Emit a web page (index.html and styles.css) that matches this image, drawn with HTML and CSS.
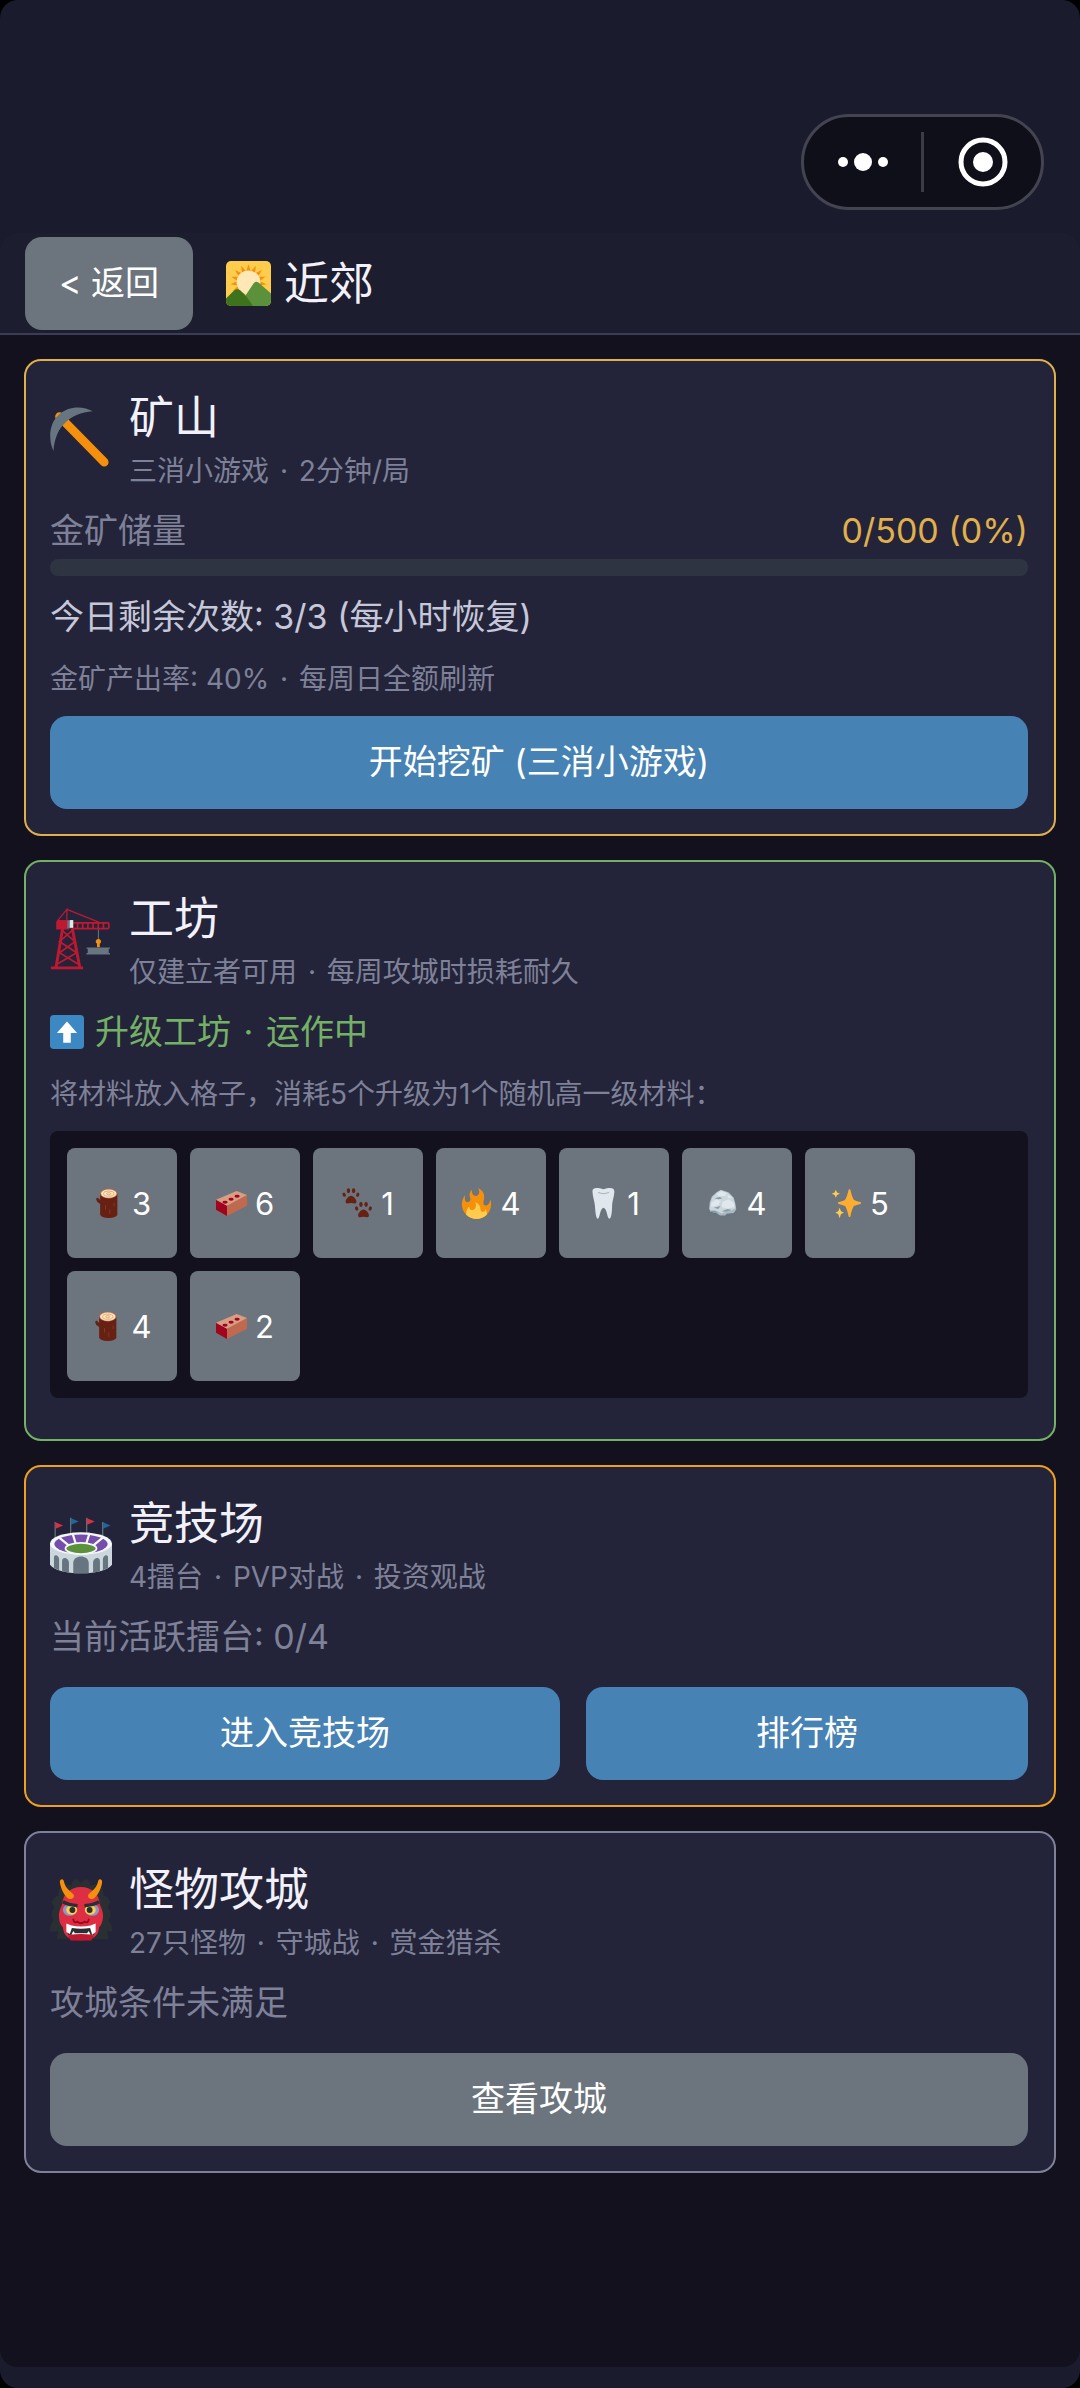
FILE: index.html
```html
<!DOCTYPE html>
<html lang="zh-CN">
<head>
    <meta charset="UTF-8">
    <meta name="viewport" content="width=device-width, initial-scale=1.0">
    <title>近郊</title>
    <link rel="stylesheet" href="styles.css">
</head>
<body>

    <!-- Shared icons -->
    <svg class="sprite" aria-hidden="true">
        <symbol id="i-sunrise" viewBox="0 0 36 36">
            <rect width="36" height="36" rx="4" fill="#ffcc4d"/>
            <g fill="#f4900c">
                <path id="ray" d="M16 9 18 2.500l2 6.500z"/>
                <use href="#ray" transform="rotate(24 18 17)"/>
                <use href="#ray" transform="rotate(48 18 17)"/>
                <use href="#ray" transform="rotate(72 18 17)"/>
                <use href="#ray" transform="rotate(96 18 17)"/>
                <use href="#ray" transform="rotate(-24 18 17)"/>
                <use href="#ray" transform="rotate(-48 18 17)"/>
                <use href="#ray" transform="rotate(-72 18 17)"/>
                <use href="#ray" transform="rotate(-96 18 17)"/>
                <use href="#ray" transform="rotate(-120 18 17)"/>
            </g>
            <circle cx="18" cy="17" r="9.500" fill="#ffe8b6"/>
            <path fill="#5c913b" d="M10 36 22 18q2.500-3 5 0l9 8v6a4 4 0 0 1-4 4z"/>
            <path fill="#3e721d" d="M0 30l6.500-6.500q2.500-2 5 0Q17 28 21.500 36H4a4 4 0 0 1-4-4z"/>
        </symbol>
        <symbol id="i-pickaxe" viewBox="0 0 36 36">
            <path d="M5.500 5.500 31.500 32" stroke="#f4900c" stroke-width="5" stroke-linecap="round"/>
            <path fill="#66757f" d="M24.800 2.500C19-.8 10.500-.6 4.800 4.800-.8 10-.9 19.500 2 25.500 2.600 18 5 12.600 9 9c4-3.900 9-6 15.800-6.500z"/>
        </symbol>
        <symbol id="i-crane" viewBox="0 0 36 36">
            <g fill="none" stroke="#be1931">
                <path stroke-width=".7" d="M4.300 7.500 9.800.8v7M9.800.8 28.300 8.200"/>
                <path stroke-width="1.700" d="M7.300 12 3.500 34.500M13 12l4.300 22.500"/>
                <path stroke-width="1" d="M7 13l7.500 6.500-9 6.500 11.500 7M13 13l-7.500 6.500 10 6.500-12 7"/>
                <path stroke-width="1" d="M13 8.600h20.500q.7 0 .7.700v2q0 .7-.7.700H13zM16 8.600V12M19 8.600V12M22 8.600V12M25 8.600V12M28 8.600V12M31 8.600V12"/>
            </g>
            <path fill="#be1931" d="M.5 33.900h18.700v1.700H.5zM4.500 7H11v5.500H3.600V8z"/>
            <path fill="#66757f" d="M10 7.200h2v4.600h-2z"/>
            <path fill="#e1e8ed" d="M11.500 7h2v4.500h-2z"/>
            <path stroke="#66757f" stroke-width=".6" d="M28.100 12.500v6"/>
            <path fill="#f4900c" d="M28.100 18a1.500 1.500 0 0 1 .8 2.800v2h-1.600v-2a1.500 1.500 0 0 1 .8-2.800z"/>
            <path fill="#66757f" d="M21.200 22.900h13.600v.8h-.7v2.500h.7v.8H21.200v-.8h.7v-2.500h-.7z"/>
        </symbol>
        <symbol id="i-stadium" viewBox="0 0 36 36">
            <path stroke="#66757f" stroke-width=".7" d="M3 5.200V14M12 2.800V12M21.300 2.800V12M30.600 5.200V14"/>
            <path fill="#dd2e44" d="M3.200 5.400 7.600 7.300 3.200 9.200zM21.500 3 26 4.900l-4.500 1.900z"/>
            <path fill="#226699" d="M12.200 3l4.500 1.900-4.500 1.900zM30.800 5.400l4.400 1.900-4.400 1.900z"/>
            <path fill="#ccd6dd" d="M0 17.500V30c2 3 9 5 18 5s16-2 18-5V17.500z"/>
            <ellipse cx="18" cy="17.700" rx="18" ry="6.500" fill="#f5f8fa"/>
            <ellipse cx="18" cy="18" rx="15.500" ry="5.500" fill="#744eaa"/>
            <path stroke="#f5f8fa" stroke-width="1.300" d="M13 11.500l2 6.500M23 11.500l-2 6.500M5 14l6 5M31 14l-6 5"/>
            <ellipse cx="18" cy="20.600" rx="9" ry="3.200" fill="#5c913b" stroke="#f5f8fa" stroke-width="1"/>
            <path fill="#66757f" d="M13.500 35v-6c0-5 9-5 9 0v6zM7 34v-6c0-3 4-2 4 1v5.500zM2.300 32v-6c0-2.500 3-1.500 3 1v6.200zM29 34v-6c0-3-4-2-4 1v5.500zM33.700 32v-6c0-2.500-3-1.500-3 1v6.200z"/>
        </symbol>
        <symbol id="i-ogre" viewBox="0 0 36 36">
            <path fill="#292f33" d="M18 2.500Q19.500.2 21.500 0q2 1.500 2 4 1.500-1 4-.5 4 1 3.500 6 3 .5 4 4-1 2-1.500 3 2 2 1.500 5.500l-1 2q2.500 3 2 6.500h-3q1 2 1 4.500H4q0-2.500 1-4.500H0q0-4 2-6.500l-1-2Q.5 18.500 2.500 16.500l-1.500-3q1-3.500 4-4-.5-5 3.500-6 2.500-.5 4 .5 0-2.500 2-4Q16.500.2 18 2.500z"/>
            <path fill="#dd2e44" d="M18 4.600c6 0 10.500 4 10.800 9.400.2 2 2.200 4 2 8-.2 3-1.300 5-2.300 6-.5 5-3 7.500-10.500 7.500S8 33 7.500 28c-1-1-2.300-3-2.300-6-.2-4 1.800-6 2-8C7.500 8.600 12 4.600 18 4.600z"/>
            <path fill="#f4900c" d="M6.800.2c-.9.200-1.200 1-1 2.200.8 3.800 2.500 7.200 5 9 1.500.8 3.300-.2 3.100-1.800C13.500 7.800 9 6.500 8 1.200 7.800.5 7.400 0 6.800.2zM29.200.2c.9.200 1.200 1 1 2.200-.8 3.800-2.500 7.200-5 9-1.500.8-3.300-.2-3.100-1.800.4-1.800 4.900-3.100 5.900-8.400.2-.7.600-1.200 1.200-1z"/>
            <ellipse cx="11.500" cy="18" rx="4" ry="3.400" fill="#8899c8"/>
            <ellipse cx="24.500" cy="18" rx="4" ry="3.400" fill="#8899c8"/>
            <ellipse cx="12.600" cy="18" rx="3.200" ry="2.700" fill="#ffcc4d"/>
            <ellipse cx="23.400" cy="18" rx="3.200" ry="2.700" fill="#ffcc4d"/>
            <circle cx="13" cy="18" r="1.700" fill="#292f33"/>
            <circle cx="23" cy="18" r="1.700" fill="#292f33"/>
            <path fill="none" stroke="#292f33" stroke-width="1.900" d="M7.500 13.200q3 1.800 8.500 2.300M28.500 13.200q-3 1.800-8.500 2.300"/>
            <path fill="none" stroke="#a0041e" stroke-width="1" stroke-linecap="round" d="M13.500 23.500q.5 2.500 2.500 1.200 2 2 4 0 2 1.300 2.500-1.200"/>
            <path fill="#292f33" d="M9.800 27q8.200 2 16.400 0l-.7 5.500q-7.500-1.500-15 0z"/>
            <path fill="#fff" d="M9.500 25.800l3 1.200q5.500 1.200 11 0l3-1.200v5l-2 1.500-1.200-3.800q-5.300.8-10.600 0L11.500 32l-2-1.200zM12.500 32.200l1-2 1 1.300h7l1-1.300 1 2z"/>
            <path fill="#be1931" d="M10.500 33q7.500-2.200 15 0l-1.500 2.700H12z"/>
        </symbol>
        <symbol id="i-up" viewBox="0 0 36 36">
            <rect width="36" height="36" rx="4" fill="#3b88c3"/>
            <path fill="#fff" d="M18 7l10.700 12H22v10.500h-8V19H7.300z"/>
        </symbol>
        <symbol id="i-wood" viewBox="0 0 36 36">
            <path fill="#662113" d="M8.300 6.500v12L4.800 16 3.500 12.500l2-1.500 2.800 3zM8.300 6.500h20V31q-1 3.500-10 3.800-9-.3-10-3.800z"/>
            <ellipse cx="18.300" cy="6.600" rx="10" ry="5.600" fill="#c1694f"/>
            <ellipse cx="18.300" cy="6.600" rx="9" ry="4.800" fill="#ffe8b6"/>
            <ellipse cx="18.300" cy="6.600" rx="6" ry="3" fill="none" stroke="#d99e82"/>
            <ellipse cx="18.300" cy="6.600" rx="2.500" ry="1.200" fill="none" stroke="#d99e82"/>
            <path fill="none" stroke="#8a3a25" d="M14.500 20v5M19.500 25v5M24.500 17v4"/>
        </symbol>
        <symbol id="i-brick" viewBox="0 0 36 36">
            <path fill="#a0041e" d="M0 13.600l12.800 6.900v12.100L0 25.200z"/>
            <path fill="#c1694f" d="M12.800 20.500 36 8v12.500L12.800 32.600z"/>
            <path fill="#d99e82" d="M0 13.600 24 3.500 36 8 12.800 20.500z"/>
            <g fill="#a0041e">
                <ellipse cx="10.500" cy="16.500" rx="3" ry="1.700"/>
                <ellipse cx="17.500" cy="13" rx="3" ry="1.700"/>
                <ellipse cx="24.500" cy="9.500" rx="3" ry="1.700"/>
            </g>
        </symbol>
        <symbol id="i-paws" viewBox="0 0 36 36">
            <g id="paw" fill="#662113">
                <path d="M10.500 9c3 0 6.500 4.500 6.300 7-.3 3.300-3.300 1.500-6.300 1.500S4.500 19.300 4.200 16c-.2-2.500 3.300-7 6.300-7z"/>
                <ellipse cx="2.500" cy="7.800" rx="1.800" ry="2.500" transform="rotate(-20 2.500 7.800)"/>
                <ellipse cx="7.500" cy="3.300" rx="2" ry="2.900"/>
                <ellipse cx="13.500" cy="3.300" rx="2" ry="2.900"/>
                <ellipse cx="18.300" cy="7.800" rx="1.800" ry="2.500" transform="rotate(20 18.300 7.800)"/>
            </g>
            <use href="#paw" x="14.500" y="16"/>
        </symbol>
        <symbol id="i-fire" viewBox="0 0 36 36">
            <path fill="#f4900c" d="M35 19c0-2.062-.367-4.039-1.040-5.868-.46 5.389-3.333 8.157-6.335 6.868-2.812-1.208-.917-5.917-.777-8.164.236-3.809-.012-8.169-6.931-11.794 2.875 5.500.333 8.917-2.333 9.125-2.958.231-5.667-2.542-4.667-7.042-3.238 2.386-3.332 6.402-2.333 9 1.042 2.708-.042 4.958-2.583 5.208-2.840.28-4.418-3.041-2.963-8.333C2.520 10.965 1 14.805 1 19c0 9.389 7.611 17 17 17s17-7.611 17-17z"/>
            <path fill="#ffcc4d" d="M28.394 23.999c.148 3.084-2.561 4.293-4.019 3.709-2.106-.843-1.541-2.291-2.083-5.291s-2.625-5.083-5.708-6c2.250 6.333-1.247 8.667-3.080 9.084-1.872.426-3.753-.001-3.968-4.007C7.352 23.668 6 26.676 6 30c0 .368.023.73.055 1.090C9.125 34.124 13.342 36 18 36s8.875-1.876 11.945-4.910c.032-.36.055-.722.055-1.090 0-2.187-.584-4.236-1.606-6.001z"/>
        </symbol>
        <symbol id="i-tooth" viewBox="0 0 36 36">
            <path fill="#e1e8ed" d="M5.200 4C5-1 11-.5 18 1.500 25-.5 31-1 30.600 5c-.4 6-2.400 10-2.600 15 0 6-.8 15.500-3 15.700C22 36 22.500 24 18 23c-4.500 1-4 13-6.700 12.700C9 35.500 8.500 26 8 20 7.500 15 5.400 10 5.200 4z"/>
            <path fill="none" stroke="#99aab5" stroke-linecap="round" d="M12 5.500q6 2.500 12 0"/>
        </symbol>
        <symbol id="i-rock" viewBox="0 0 36 36">
            <path fill="#66757f" d="M16 2l9 3 6 6 2 7 1.500 8-2.500 5-7 1-3 2.500h-8L11 32l-7-2-2.500-5 1-8L5 10l6-5z"/>
            <path fill="#aab8c2" d="M16 2l9 3 6 6 2 7 1 7-3 4-8 1-2 2h-6l-4-3-7-1.500L2.500 24l.5-7 2.500-7L11 5z"/>
            <path fill="#ccd6dd" d="M16 2.500l8.500 3 6 6 2 7 .5 5-5 3-6 1-5 2-6-3-7 .5-1-3 1-7 2-6L12 5z"/>
            <path fill="#e1e8ed" d="M11 7l6-3.500 6 3-2 2.500-7 1zM5 17l6-4 5 2-3 5-8 2zM18 16l7-3 6 4 1 5-8 2-7-2zM24 8l4 2 1 2-5-1z"/>
            <path fill="#8899a6" d="M9 12l6-1.500 3 1.500-5 1zM8 23l8-2-3 3.500zM17 27l7-2.500 5 1-7 2zM3.500 26l6 .5 3 2.500-7-1z"/>
        </symbol>
        <symbol id="i-sparkles" viewBox="0 0 36 36">
            <path fill="#ffac33" d="M21.500 1.500c.7 0 1 .6 1.200 1.200 1.200 6.500 3.800 11 3.800 11s2 1.500 7.700 2.700c.8.200.8 1.900 0 2.100C28.500 19.700 26.500 21 26.500 21s-2.600 5-3.800 11.500c-.2.800-.5 1.300-1.200 1.300s-1-.5-1.200-1.300C19.100 26 16.500 21 16.500 21s-2-1.300-7.700-2.500c-.8-.2-.8-1.900 0-2.100 5.700-1.200 7.700-2.700 7.700-2.700s2.600-4.500 3.800-11c.2-.6.5-1.200 1.200-1.200z"/>
            <path fill="#ffcc4d" d="M5.600 2l1.400 3.200 3.400 1.400L7 8l-1.400 3.300L4.200 8 .8 6.600l3.400-1.400zM10 23l1.600 4 3.400 1.700-3.400 1.600L10 35l-1.600-4.700L5 28.700 8.400 27z"/>
        </symbol>
    </svg>

    <div class="app">
        <div class="statusbar">
            <div class="capsule">
                <button class="capsule-btn" type="button" aria-label="更多">
                    <svg width="50" height="18" viewBox="0 0 50 18"><g fill="#fff"><circle cx="5" cy="9" r="5"/><circle cx="25" cy="9" r="9"/><circle cx="45" cy="9" r="5"/></g></svg>
                </button>
                <span class="capsule-line"></span>
                <button class="capsule-btn" type="button" aria-label="关闭">
                    <svg width="50" height="50" viewBox="0 0 50 50"><circle cx="25" cy="25" r="22" fill="none" stroke="#fff" stroke-width="5"/><circle cx="25" cy="25" r="10" fill="#fff"/></svg>
                </button>
            </div>
        </div>

        <header class="header">
            <button class="btn btn-gray btn-back" type="button">&lt; 返回</button>
            <h1 class="page-title"><svg class="icon-title"><use href="#i-sunrise"/></svg>近郊</h1>
        </header>

        <main class="content">
            <section class="card card-gold">
                <div class="card-head">
                    <svg class="icon-card"><use href="#i-pickaxe"/></svg>
                    <div>
                        <h2>矿山</h2>
                        <p class="sub">三消小游戏<span class="dot"> · </span>2分钟/局</p>
                    </div>
                </div>
                <div class="row">
                    <label for="reserve">金矿储量</label>
                    <span class="gold">0/500 (0%)</span>
                </div>
                <progress class="bar" id="reserve" value="0" max="500"></progress>
                <p class="chances">今日剩余次数: 3/3 (每小时恢复)</p>
                <p class="note">金矿产出率: 40%<span class="dot"> · </span>每周日全额刷新</p>
                <button class="btn btn-blue btn-block" type="button">开始挖矿 (三消小游戏)</button>
            </section>

            <section class="card card-green">
                <div class="card-head">
                    <svg class="icon-card"><use href="#i-crane"/></svg>
                    <div>
                        <h2>工坊</h2>
                        <p class="sub">仅建立者可用<span class="dot"> · </span>每周攻城时损耗耐久</p>
                    </div>
                </div>
                <p class="status green"><svg class="icon-text"><use href="#i-up"/></svg>升级工坊<span class="dot"> · </span>运作中</p>
                <p class="note">将材料放入格子，消耗5个升级为1个随机高一级材料：</p>
                <div class="slots">
                    <button class="slot" type="button"><svg class="icon-slot"><use href="#i-wood"/></svg>3</button>
                    <button class="slot" type="button"><svg class="icon-slot"><use href="#i-brick"/></svg>6</button>
                    <button class="slot" type="button"><svg class="icon-slot"><use href="#i-paws"/></svg>1</button>
                    <button class="slot" type="button"><svg class="icon-slot"><use href="#i-fire"/></svg>4</button>
                    <button class="slot" type="button"><svg class="icon-slot"><use href="#i-tooth"/></svg>1</button>
                    <button class="slot" type="button"><svg class="icon-slot"><use href="#i-rock"/></svg>4</button>
                    <button class="slot" type="button"><svg class="icon-slot"><use href="#i-sparkles"/></svg>5</button>
                    <button class="slot" type="button"><svg class="icon-slot"><use href="#i-wood"/></svg>4</button>
                    <button class="slot" type="button"><svg class="icon-slot"><use href="#i-brick"/></svg>2</button>
                </div>
            </section>

            <section class="card card-orange">
                <div class="card-head">
                    <svg class="icon-card"><use href="#i-stadium"/></svg>
                    <div>
                        <h2>竞技场</h2>
                        <p class="sub">4擂台<span class="dot"> · </span>PVP对战<span class="dot"> · </span>投资观战</p>
                    </div>
                </div>
                <p class="status">当前活跃擂台: 0/4</p>
                <div class="actions">
                    <button class="btn btn-blue" type="button">进入竞技场</button>
                    <button class="btn btn-blue" type="button">排行榜</button>
                </div>
            </section>

            <section class="card card-gray">
                <div class="card-head">
                    <svg class="icon-card"><use href="#i-ogre"/></svg>
                    <div>
                        <h2>怪物攻城</h2>
                        <p class="sub">27只怪物<span class="dot"> · </span>守城战<span class="dot"> · </span>赏金猎杀</p>
                    </div>
                </div>
                <p class="status">攻城条件未满足</p>
                <div class="actions">
                    <button class="btn btn-gray" type="button">查看攻城</button>
                </div>
            </section>
        </main>
    </div>

</body>
</html>
```
FILE: styles.css
```css
* {
    box-sizing: border-box;
    margin: 0;
    padding: 0;
}
body {
    background: #000;
    color: #7e8197;
    font-family: Inter, "Noto Sans CJK SC", sans-serif;
    font-size: 34px;
    line-height: 45px;
}
button {
    border: none;
    color: #fff;
    font-family: inherit;
    cursor: pointer;
}
svg {
    flex: none;
}
.sprite {
    position: absolute;
    width: 0;
    height: 0;
}
.app {
    display: flex;
    flex-direction: column;
    min-height: 100vh;
    padding-bottom: 21px;
    background: #1a1b2d;
    border-radius: 18px;
}

/* top area with the capsule menu */
.statusbar {
    display: flex;
    justify-content: flex-end;
    padding: 114px 36px 23px;
}
.capsule {
    display: flex;
    align-items: center;
    width: 243px;
    height: 96px;
    background: #0f0f1a;
    border: 3px solid #444351;
    border-radius: 48px;
}
.capsule-btn {
    display: flex;
    flex: 1;
    align-items: center;
    justify-content: center;
    height: 100%;
    background: none;
}
.capsule-line {
    width: 3px;
    height: 60px;
    background: #3c3b48;
}

.header {
    display: flex;
    align-items: center;
    gap: 33px;
    padding: 4px 25px 3px;
    background: #1c1d2e;
    border-bottom: 2px solid #3a3d54;
    border-radius: 18px 18px 0 0;
}
.page-title {
    display: flex;
    align-items: center;
    gap: 13px;
    color: #f2f1fa;
    font-size: 45px;
    font-weight: normal;
    line-height: 60px;
}
.icon-title {
    width: 45px;
    height: 45px;
}

.content {
    display: flex;
    flex: 1;
    flex-direction: column;
    gap: 24px;
    padding: 24px;
    background: #12111d;
    border-radius: 0 0 18px 18px;
}
.card {
    padding: 25px 26px 25px 24px;
    background: #23243a;
    border: 2px solid #7e8197;
    border-radius: 17px;
}
.card-gold {
    border-color: #e0b04c;
}
.card-green {
    padding-bottom: 41px;
    border-color: #74b066;
}
.card-orange {
    border-color: #f0a020;
}
.card-gray {
    border-color: #7e8197;
}
.card-head {
    display: flex;
    align-items: center;
    gap: 17px;
    margin-bottom: 18px;
}
.icon-card {
    width: 62px;
    height: 62px;
}
h2 {
    padding-top: 2px;
    color: #f2f1fa;
    font-size: 45px;
    font-weight: normal;
    line-height: 60px;
}
.sub {
    margin-top: 4px;
    font-size: 28px;
    line-height: 38px;
}
.dot {
    padding: 0 3px;
    white-space: pre;
}
.note {
    margin: 21px 0 18px;
    font-size: 28px;
    line-height: 38px;
}
.row {
    display: flex;
    justify-content: space-between;
}
.gold {
    color: #e0b04c;
}
.green {
    color: #74b066;
}
.bar {
    display: block;
    width: 100%;
    height: 17px;
    margin: 6px 0 18px;
    overflow: hidden;
    appearance: none;
    background: #2f3443;
    border: none;
    border-radius: 8px;
}
.bar::-webkit-progress-bar {
    background: #2f3443;
}
.bar::-webkit-progress-value {
    background: #e0b04c;
}
.chances {
    color: #c6c8da;
}
.status {
    display: flex;
    align-items: center;
}
.icon-text {
    width: 34px;
    height: 34px;
    margin-right: 11px;
}

.btn {
    height: 93px;
    padding: 0 34px 2px;
    border-radius: 17px;
    font-size: 34px;
    line-height: 45px;
}
.btn-blue {
    background: #4682b4;
}
.btn-gray {
    background: #6c757d;
}
.btn-block {
    display: block;
    width: 100%;
}
.actions {
    display: flex;
    gap: 26px;
    margin-top: 28px;
}
.actions .btn {
    flex: 1 1 auto;
}

.slots {
    display: flex;
    flex-wrap: wrap;
    gap: 13px;
    padding: 17px;
    background: #12111d;
    border-radius: 8px;
}
.slot {
    display: flex;
    align-items: center;
    justify-content: center;
    gap: 8px;
    width: 110px;
    height: 110px;
    background: #6c757d;
    border-radius: 8px;
    font-size: 31px;
}
.icon-slot {
    width: 31px;
    height: 31px;
}
```
